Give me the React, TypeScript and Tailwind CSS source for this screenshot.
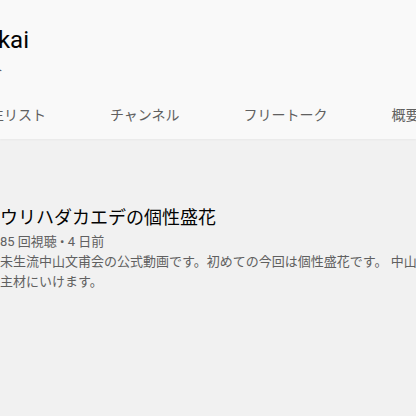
export default function App() {
  const tabs = ["再生リスト", "チャンネル", "フリートーク", "概要"];
  return (
    <div
      className="w-[416px] h-[416px] overflow-hidden bg-[#f1f1f1]"
      style={{ fontFamily: 'Roboto, "Noto Sans CJK JP", sans-serif' }}
    >
      {/* Channel header */}
      <div className="h-[139px] bg-[#f9f9f9] pt-[25px] shadow-[0_1px_2px_rgba(0,0,0,0.04)]">
        <div className="w-[220px] -ml-[191px] text-right text-[24px] leading-[30px] text-[#030303] whitespace-nowrap">
          Nakayama Bunpokai
        </div>
        <div className="w-[200px] -ml-[198px] mt-[1px] text-right text-[14px] leading-[18px] text-[#606060] whitespace-nowrap">
          チャンネル登録者数 92人
        </div>
        <div className="flex h-[48px] mt-[17px] -ml-[56px] whitespace-nowrap">
          {tabs.map((t) => (
            <div
              key={t}
              className="px-8 flex items-center text-[14px] text-[#606060] shrink-0"
            >
              {t}
            </div>
          ))}
        </div>
      </div>

      {/* Featured video info */}
      <div className="pt-[66px] pr-0">
        <div className="text-[18px] leading-[26px] text-[#030303] whitespace-nowrap">
          ウリハダカエデの個性盛花
        </div>
        <div className="mt-[2px] text-[13px] leading-[18px] text-[#606060] whitespace-nowrap">
          85 回視聴 • 4 日前
        </div>
        <div className="mt-[1px] w-[430px] text-[13px] leading-[20px] text-[#606060]">
          未生流中山文甫会の公式動画です。初めての今回は個性盛花です。 中山高
          <br />
          主材にいけます。
        </div>
      </div>
    </div>
  );
}
